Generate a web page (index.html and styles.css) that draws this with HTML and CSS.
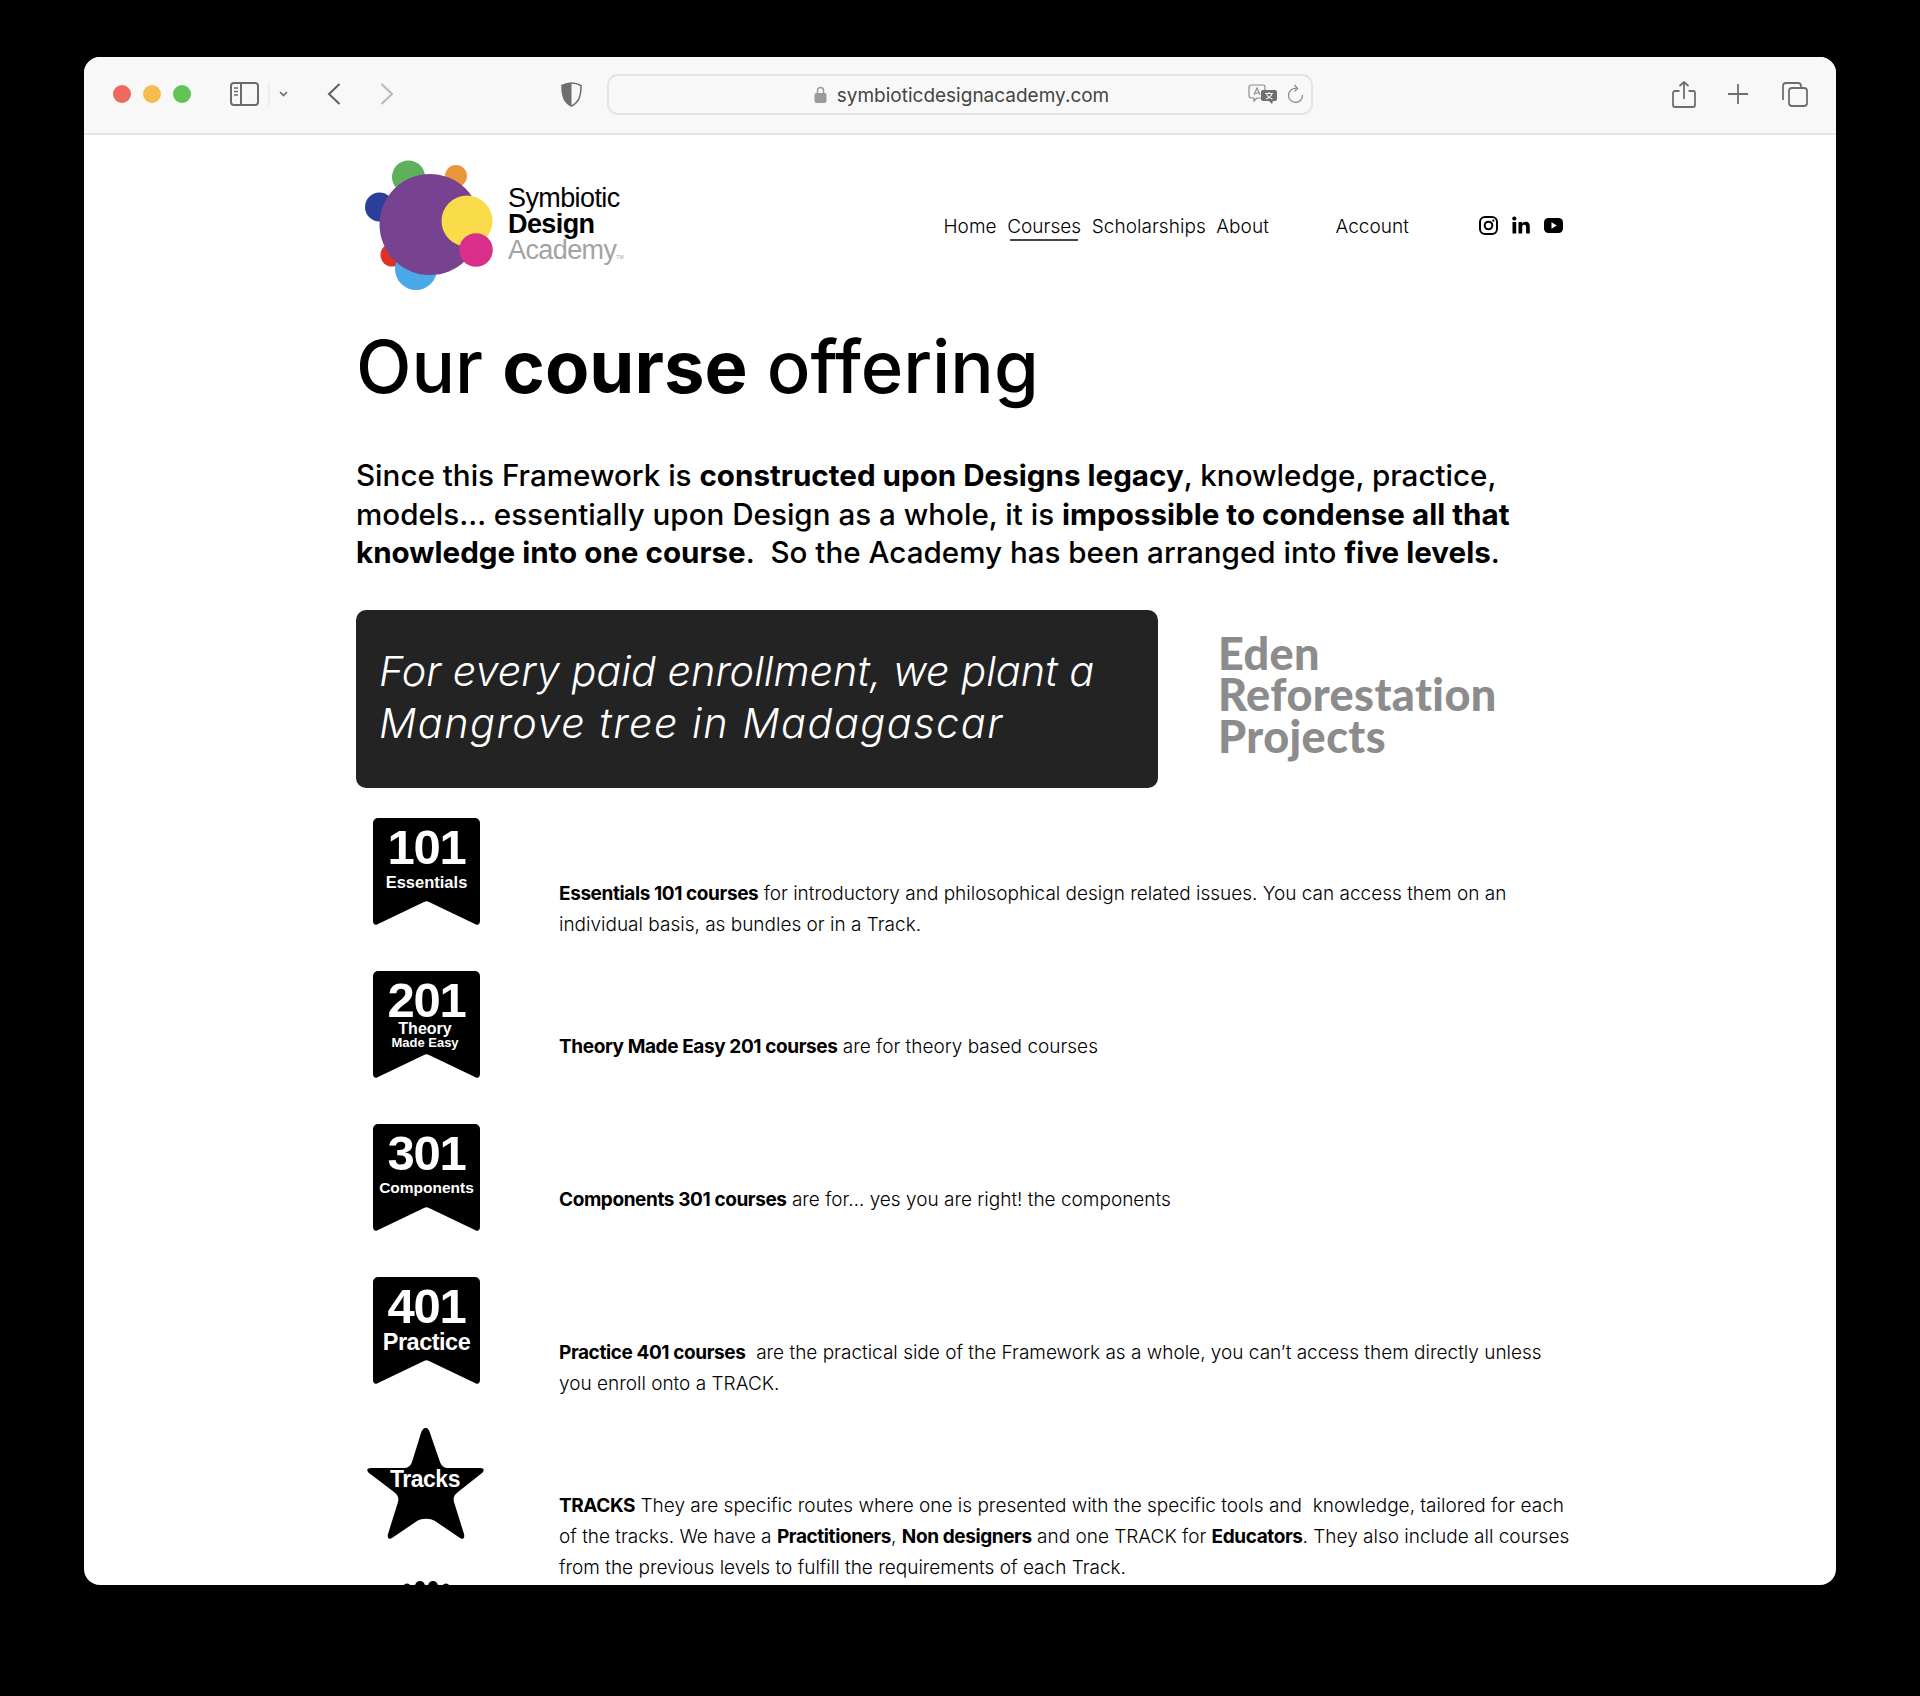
FILE: index.html
```html
<!DOCTYPE html>
<html lang="en">
<head>
    <meta charset="UTF-8">
    <meta name="viewport" content="width=device-width, initial-scale=1.0">
    <title>Our course offering</title>
    <link rel="stylesheet" href="styles.css">
</head>
<body>
    <div class="window">
        <div class="toolbar">
            <span class="light light-red"></span>
            <span class="light light-yellow"></span>
            <span class="light light-green"></span>

            <svg class="tb-sidebar" width="60" height="24" viewBox="0 0 60 24" fill="none" stroke="#6b6b6b" stroke-width="2">
                <rect x="1" y="1" width="27" height="22" rx="3"/>
                <path d="M11 1v22"/>
                <path d="M4 6h4M4 9.500h4M4 13h4" stroke-width="1.500"/>
                <path d="M39 0v24" stroke="#e3e3e3" stroke-width="1"/>
                <path d="M50 10l3.500 3.500L57 10" stroke-width="1.600"/>
            </svg>
            <svg class="tb-back" width="14" height="22" viewBox="0 0 14 22" fill="none" stroke="#5f5f5f" stroke-width="2"><path d="M12.500 1L2 11l10.500 10"/></svg>
            <svg class="tb-forward" width="14" height="22" viewBox="0 0 14 22" fill="none" stroke="#b8b8b8" stroke-width="2"><path d="M1.500 1L12 11 1.500 21"/></svg>
            <svg class="tb-shield" width="21" height="25" viewBox="0 0 21 25">
                <path d="M10.500 1C7 1 4 2 1 3.500 1 14 3 20.500 10.500 24 18 20.500 20 14 20 3.500 17 2 14 1 10.500 1z" fill="#f7f7f7" stroke="#6e6e6e" stroke-width="1.500"/>
                <path d="M10.500 1C7 1 4 2 1 3.500 1 14 3 20.500 10.500 24z" fill="#6e6e6e"/>
            </svg>

            <div class="urlbar">
                <svg class="lock" width="13" height="17" viewBox="0 0 13 17">
                    <path d="M3.500 7V4.500a3 3 0 0 1 6 0V7" fill="none" stroke="#9a9a9a" stroke-width="1.500"/>
                    <rect x="0.500" y="7" width="12" height="10" rx="2" fill="#9a9a9a"/>
                </svg>
                <span class="url">symbioticdesignacademy.com</span>
                <svg class="translate" width="29" height="20" viewBox="0 0 29 20">
                    <path d="M3 1h12a2 2 0 0 1 2 2v9a2 2 0 0 1-2 2H9l-3 3v-3H3a2 2 0 0 1-2-2V3a2 2 0 0 1 2-2z" fill="#f7f7f7" stroke="#8a8a8a" stroke-width="1.200"/>
                    <path d="M6 11l3-7 3 7M7.200 9h3.600" fill="none" stroke="#8a8a8a" stroke-width="1.100"/>
                    <path d="M15 6h12a2 2 0 0 1 2 2v7a2 2 0 0 1-2 2h-2l-1 3-3-3h-6a2 2 0 0 1-2-2V8a2 2 0 0 1 2-2z" fill="#6e6e6e"/>
                    <path d="M17 9.500h8M21 8v1.500M24 9.500c-1 3-3 4.500-6 5.500M18.500 10.500c1 2 3 3.500 6 4.500" fill="none" stroke="#f7f7f7" stroke-width="1.100"/>
                </svg>
                <svg class="reload" width="17" height="20" viewBox="0 0 17 20" fill="none" stroke="#8a8a8a" stroke-width="1.300">
                    <path d="M9.500 4.500A7 7 0 1 0 15.500 11"/>
                    <path d="M7.500 1l3 3.500-3 3"/>
                </svg>
            </div>

            <svg class="tb-share" width="24" height="27" viewBox="0 0 24 27" fill="none" stroke="#6e6e6e" stroke-width="1.800">
                <path d="M7.500 10H3a2 2 0 0 0-2 2v12a2 2 0 0 0 2 2h18a2 2 0 0 0 2-2V12a2 2 0 0 0-2-2h-4.500"/>
                <path d="M12 18V1M7.500 5L12 1l4.500 4"/>
            </svg>
            <svg class="tb-plus" width="20" height="20" viewBox="0 0 20 20" fill="none" stroke="#6e6e6e" stroke-width="1.800"><path d="M10 0v20M0 10h20"/></svg>
            <svg class="tb-tabs" width="26" height="25" viewBox="0 0 26 25" fill="none" stroke="#6e6e6e" stroke-width="1.800">
                <path d="M1 18V4a3 3 0 0 1 3-3h12a3 3 0 0 1 3 3v2"/>
                <rect x="7" y="6" width="18" height="18" rx="3"/>
            </svg>
        </div>

        <div class="page">
            <header class="site-header">
                <a class="logo" href="#">
                    <svg class="logo-mark" width="128" height="130" viewBox="365 160 128 130">
                        <circle cx="408.500" cy="177" r="16.500" fill="#5db15b"/>
                        <circle cx="456" cy="176" r="11" fill="#ea963c"/>
                        <circle cx="379.500" cy="207" r="14.500" fill="#2b3f98"/>
                        <circle cx="392" cy="255" r="11.500" fill="#dd3327"/>
                        <circle cx="416" cy="269" r="21" fill="#4aa9e9"/>
                        <circle cx="430" cy="224.500" r="50.500" fill="#774290"/>
                        <circle cx="467" cy="221" r="25.500" fill="#fadc4a"/>
                        <circle cx="476" cy="250" r="16.800" fill="#d92f8a"/>
                    </svg>
                    <span class="logo-text">
                        <span>Symbiotic</span>
                        <strong>Design</strong>
                        <span class="logo-academy">Academy<small>TM</small></span>
                    </span>
                </a>
                <nav class="nav">
                    <a href="#">Home</a>
                    <a href="#" class="active">Courses</a>
                    <a href="#">Scholarships</a>
                    <a href="#">About</a>
                    <a href="#" class="nav-account">Account</a>
                </nav>
                <div class="social">
                    <svg width="19" height="19" viewBox="0 0 19 19" fill="none" stroke="#000" stroke-width="2">
                        <rect x="1" y="1" width="17" height="17" rx="5"/>
                        <circle cx="9.500" cy="9.500" r="3.800"/>
                        <circle cx="14.300" cy="4.700" r="1.100" fill="#000" stroke="none"/>
                    </svg>
                    <svg width="18" height="18" viewBox="0 0 18 18" fill="#000">
                        <circle cx="2.300" cy="2.500" r="2.100"/>
                        <rect x="0.500" y="6" width="3.700" height="11.500"/>
                        <path d="M6.500 6h3.500v1.600C10.700 6.500 12 5.700 13.600 5.700c3.200 0 4.200 2 4.200 5v6.800h-3.700v-6c0-1.500-.3-2.700-1.900-2.700s-2 1.200-2 2.700v6H6.500z"/>
                    </svg>
                    <svg width="19" height="15" viewBox="0 0 19 15">
                        <rect width="19" height="15" rx="4.500" fill="#000"/>
                        <path d="M7.500 4.300l5.300 3.200-5.300 3.200z" fill="#fff"/>
                    </svg>
                </div>
            </header>

            <h1 class="title">Our <b>course</b> offering</h1>

            <p class="intro">
                Since this Framework is <b>constructed upon Designs legacy</b>, knowledge, practice,<br>
                models&hellip; essentially upon Design as a whole, it is <b>impossible to condense all that</b><br>
                <b>knowledge into one course</b>.&nbsp; So the Academy has been arranged into <b>five levels</b>.
            </p>

            <div class="promo">
                <div class="promo-quote">
                    <span>For every paid enrollment, we plant a</span>
                    <span class="promo-line2">Mangrove tree in Madagascar</span>
                </div>
                <div class="promo-brand">Eden<br>Reforestation<br>Projects</div>
            </div>

            <section class="levels">
                <div class="level">
                    <svg class="badge" width="107" height="107" viewBox="0 0 107 107">
                        <path class="ribbon" d="M5 0h97a5 5 0 0 1 5 5v98c0 3-2 4.500-4 3.500L56 84q-2.500-1.500-5 0L4 106.500c-2 1-4-.5-4-3.500V5a5 5 0 0 1 5-5z"/>
                        <text class="badge-num" x="53.500" y="46">101</text>
                        <text class="badge-label" x="53.500" y="70" font-size="16.500">Essentials</text>
                    </svg>
                    <p class="level-text"><b>Essentials 101 courses</b> for introductory and philosophical design related issues. You can access them on an individual basis, as bundles or in a Track.</p>
                </div>
                <div class="level">
                    <svg class="badge" width="107" height="107" viewBox="0 0 107 107">
                        <path class="ribbon" d="M5 0h97a5 5 0 0 1 5 5v98c0 3-2 4.500-4 3.500L56 84q-2.500-1.500-5 0L4 106.500c-2 1-4-.5-4-3.500V5a5 5 0 0 1 5-5z"/>
                        <text class="badge-num" x="53.500" y="46">201</text>
                        <text class="badge-label" x="52" y="63" font-size="16">Theory</text>
                        <text class="badge-label" x="52" y="76" font-size="13">Made Easy</text>
                    </svg>
                    <p class="level-text"><b>Theory Made Easy 201 courses</b> are for theory based courses</p>
                </div>
                <div class="level">
                    <svg class="badge" width="107" height="107" viewBox="0 0 107 107">
                        <path class="ribbon" d="M5 0h97a5 5 0 0 1 5 5v98c0 3-2 4.500-4 3.500L56 84q-2.500-1.500-5 0L4 106.500c-2 1-4-.5-4-3.500V5a5 5 0 0 1 5-5z"/>
                        <text class="badge-num" x="53.500" y="46">301</text>
                        <text class="badge-label" x="53.500" y="69" font-size="15.500">Components</text>
                    </svg>
                    <p class="level-text"><b>Components 301 courses</b> are for&hellip; yes you are right! the components</p>
                </div>
                <div class="level">
                    <svg class="badge" width="107" height="107" viewBox="0 0 107 107">
                        <path class="ribbon" d="M5 0h97a5 5 0 0 1 5 5v98c0 3-2 4.500-4 3.500L56 84q-2.500-1.500-5 0L4 106.500c-2 1-4-.5-4-3.500V5a5 5 0 0 1 5-5z"/>
                        <text class="badge-num" x="53.500" y="46">401</text>
                        <text class="badge-label badge-label-tight" x="53.500" y="73" font-size="23.500">Practice</text>
                    </svg>
                    <p class="level-text"><b>Practice 401 courses</b>&nbsp; are the practical side of the Framework as a whole, you can&rsquo;t access them directly unless you enroll onto a TRACK.</p>
                </div>
                <div class="level">
                    <svg class="badge badge-star" width="118" height="113" viewBox="0 0 118 113">
                        <path class="ribbon" d="M59 0c2 0 3 2 4 5l10 29c1.500 4 4 6 8 6h32c4 0 5 2 2 5L91 64c-4 3-5 6-4 10l10 32c1 4-1 6-4 4L68 93c-5-3-13-3-18 0L25 110c-3 2-5 0-4-4l10-32c1-4 0-7-4-10L2 45c-3-3-2-5 2-5h33c4 0 6.500-2 8-6l9-29c1-3 2-5 5-5z"/>
                        <text class="badge-label badge-label-tight" x="58" y="59" font-size="23">Tracks</text>
                    </svg>
                    <p class="level-text"><b>TRACKS</b> They are specific routes where one is presented with the specific tools and&nbsp; knowledge, tailored for each of the tracks. We have a <b>Practitioners</b>, <b>Non designers</b> and one TRACK for <b>Educators</b>. They also include all courses from the previous levels to fulfill the requirements of each Track.</p>
                </div>
                <div class="level level-last">
                    <svg class="badge" width="107" height="107" viewBox="0 0 107 107">
                        <circle class="ribbon" cx="53.500" cy="60" r="56"/>
                        <circle class="ribbon" cx="34" cy="6" r="3.500"/>
                        <circle class="ribbon" cx="47" cy="5" r="5"/>
                        <circle class="ribbon" cx="60" cy="5" r="5"/>
                        <circle class="ribbon" cx="73" cy="6" r="3.500"/>
                    </svg>
                </div>
            </section>
        </div>
    </div>
</body>
</html>
```
FILE: styles.css
```css
* {
    box-sizing: border-box;
}

body {
    margin: 0;
    padding: 57px 84px 0;
    height: 1696px;
    overflow: hidden;
    background-color: #000;
    font-family: "Inter", "Open Sans", sans-serif;
    color: #000;
}

a {
    color: inherit;
    text-decoration: none;
}

.window {
    height: 1528px;
    background-color: #fff;
    border-radius: 16px;
    overflow: hidden;
}

/* browser toolbar */
.toolbar {
    display: flex;
    align-items: center;
    height: 78px;
    padding: 0 28px 2px 29px;
    background-color: #f8f8f8;
    border-bottom: 2px solid #e4e4e4;
}

.light {
    width: 18px;
    height: 18px;
    border-radius: 50%;
    margin-right: 12px;
}

.light-red {
    background-color: #ee6a5f;
}

.light-yellow {
    background-color: #f5bd4f;
}

.light-green {
    background-color: #61c454;
    margin-right: 0;
}

.tb-sidebar {
    margin-left: 39px;
}

.tb-back {
    margin-left: 37px;
}

.tb-forward {
    margin-left: 39px;
}

.tb-shield {
    margin-left: 167px;
}

.urlbar {
    position: relative;
    display: flex;
    align-items: center;
    justify-content: center;
    gap: 10px;
    width: 706px;
    height: 41px;
    margin-left: 25px;
    padding-left: 3px;
    background-color: #f8f8f8;
    border: 2px solid #e4e4e4;
    border-radius: 11px;
}

.url {
    padding-top: 2px;
    font-size: 19px;
    color: #444;
}

.translate {
    position: absolute;
    top: 8px;
    right: 34px;
}

.reload {
    position: absolute;
    top: 8px;
    right: 7px;
}

.tb-share {
    margin-left: auto;
}

.tb-plus {
    margin-left: 32px;
}

.tb-tabs {
    margin-left: 34px;
}

/* page content */
.page {
    width: 1208px;
    margin: 0 auto;
}

.site-header {
    display: flex;
    align-items: center;
    height: 182px;
    padding-left: 9px;
}

.logo {
    display: flex;
    align-items: center;
    gap: 15px;
}

.logo-mark {
    margin-top: -2px;
}

.logo-text {
    display: flex;
    flex-direction: column;
    padding-top: 2px;
    font-family: "Liberation Sans", Arial, sans-serif;
    font-size: 27px;
    line-height: 26px;
    letter-spacing: -0.6px;
}

.logo-academy {
    color: #a3a3a3;
}

.logo-academy small {
    font-size: 5px;
    letter-spacing: 0;
}

.nav {
    display: flex;
    gap: 10.500px;
    margin-left: auto;
    font-size: 19px;
    font-weight: 300;
    letter-spacing: 0.050px;
}

.nav a {
    position: relative;
    white-space: nowrap;
}

.nav .active::after {
    content: "";
    position: absolute;
    left: 3px;
    right: 3px;
    bottom: -3px;
    height: 1.500px;
    background-color: #444;
}

.nav-account {
    margin-left: 56px;
}

.social {
    display: flex;
    align-items: center;
    gap: 14px;
    margin: -2px 1px 0 70px;
}

.title {
    margin: 7px 0 0;
    font-size: 72.400px;
    font-weight: 500;
    line-height: 86px;
}

.title b {
    font-weight: 700;
}

.intro {
    margin: 46px 0 38px;
    font-size: 29.600px;
    font-weight: 500;
    line-height: 38.600px;
}

.intro b {
    font-weight: 700;
}

.promo {
    display: flex;
    align-items: center;
    height: 178px;
}

.promo-quote {
    display: flex;
    flex-direction: column;
    justify-content: center;
    width: 802px;
    height: 100%;
    padding: 0 23px 3px;
    background-color: #232323;
    border-radius: 10px;
    color: #fff;
    font-size: 41.400px;
    font-style: italic;
    font-weight: 300;
    line-height: 52px;
}

.promo-line2 {
    letter-spacing: 1.500px;
}

.promo-brand {
    margin: -8px 0 0 60px;
    font-family: "Lato", sans-serif;
    font-size: 45px;
    font-weight: 900;
    letter-spacing: 0.400px;
    line-height: 41.500px;
    color: #8c8c8c;
}

.levels {
    margin-top: 30px;
}

.level {
    display: flex;
    align-items: flex-start;
    min-height: 153px;
}

.level-last {
    margin-top: -3px;
}

.badge {
    flex: none;
    margin: 0 79px 0 17px;
}

.badge-star {
    margin: -2px 74px 0 11px;
}

.ribbon {
    fill: #000;
}

.badge-num {
    fill: #fff;
    font-family: "Liberation Sans", Arial, sans-serif;
    font-size: 49px;
    font-weight: 700;
    letter-spacing: -1.200px;
    text-anchor: middle;
}

.badge-label {
    fill: #fff;
    font-family: "Liberation Sans", Arial, sans-serif;
    font-weight: 700;
    text-anchor: middle;
}

.badge-label-tight {
    letter-spacing: -0.500px;
}

.level-text {
    flex: 1;
    margin: 60px -6px 0 0;
    font-size: 19px;
    font-weight: 300;
    line-height: 31.300px;
}

.level-text b {
    font-weight: 700;
    letter-spacing: -0.400px;
}
```
